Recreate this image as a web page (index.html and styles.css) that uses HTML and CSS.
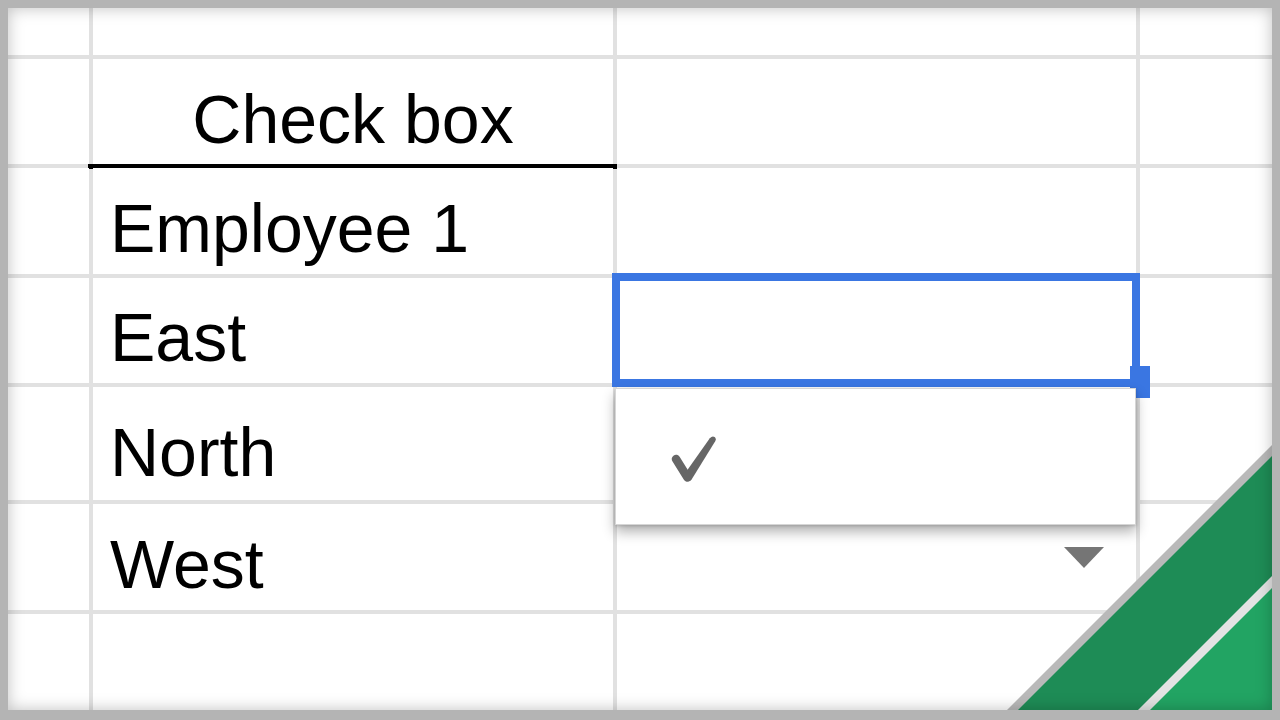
FILE: index.html
```html
<!DOCTYPE html>
<html lang="en">
<head>
<meta charset="utf-8">
<title>Check box</title>
<link rel="stylesheet" href="styles.css">
</head>
<body>
<div class="sheet">
  <div class="grid">
    <div class="cell"></div><div class="cell"></div><div class="cell"></div><div class="cell"></div>

    <div class="cell"></div><div class="cell text head">Check box</div><div class="cell"></div><div class="cell"></div>

    <div class="cell"></div><div class="cell text">Employee 1</div><div class="cell"></div><div class="cell"></div>

    <div class="cell"></div><div class="cell text">East</div>
    <div class="cell selected">
      <div class="sel-border"></div>
      <div class="handle"></div>
      <div class="dropdown">
        <svg class="check" width="46" height="48" viewBox="0 0 46 48" aria-hidden="true">
          <path d="M5 24 L16.5 42.5" stroke="#666666" stroke-width="8.5" stroke-linecap="round" fill="none"/>
          <path d="M12.5 40.5 L38.8 3.2 Q41.2 0.6 43.6 2 Q45.6 3.8 44.2 6.2 L20.6 44.6 Q16.6 49.2 12.5 40.5 Z" fill="#666666"/>
        </svg>
      </div>
    </div>
    <div class="cell"></div>

    <div class="cell"></div><div class="cell text north">North</div><div class="cell"></div><div class="cell"></div>

    <div class="cell"></div><div class="cell text">West</div>
    <div class="cell arrow-cell"><span class="arrow"></span></div>
    <div class="cell"></div>

    <div class="cell"></div><div class="cell"></div><div class="cell"></div><div class="cell"></div>
  </div>

  <svg class="corner" width="272" height="272" viewBox="0 0 272 272" aria-hidden="true">
    <polygon points="272,7 272,272 7,272" fill="#b9b9b9"/>
    <polygon points="272,18 272,272 18,272" fill="#1e8c56"/>
    <polygon points="272,138 272,272 138,272" fill="#e3e3e3"/>
    <polygon points="272,150 272,272 150,272" fill="#22a463"/>
  </svg>
</div>
</body>
</html>
```

FILE: styles.css
```css
html, body {
  margin: 0;
  padding: 0;
}

body {
  width: 1280px;
  height: 720px;
  background: #b4b4b4;
  overflow: hidden;
  font-family: "Liberation Sans", Arial, sans-serif;
}

.sheet {
  position: relative;
  margin: 8px 0 0 8px;
  width: 1264px;
  height: 702px;
  overflow: hidden;
  background: #ffffff;
}

.sheet::after {
  content: "";
  position: absolute;
  inset: 0;
  box-shadow: inset 0 0 16px rgba(0, 0, 0, 0.25);
  pointer-events: none;
  z-index: 20;
}

.grid {
  display: grid;
  grid-template-columns: 81px 520px 519px 132px;
  grid-template-rows: 47px 105px 106px 105px 113px 106px 96px;
  gap: 4px;
  background: #e1e1e1;
  height: 100%;
}

.cell {
  background: #ffffff;
  position: relative;
}

.text {
  display: flex;
  align-items: flex-end;
  padding: 0 0 12px 17px;
  font-size: 68px;
  line-height: 68px;
  color: #000000;
  white-space: nowrap;
}

.text.north {
  padding-bottom: 14px;
}

.text.head {
  justify-content: center;
  padding: 0 0 11px 0;
}

.text.head::after {
  content: "";
  position: absolute;
  left: -5px;
  right: -4px;
  bottom: -5px;
  height: 5px;
  background: #000000;
}

.selected {
  z-index: 5;
}

.sel-border {
  position: absolute;
  top: -5px;
  left: -5px;
  right: -4px;
  bottom: -4px;
  border: 8px solid #3a76e2;
}

.handle {
  position: absolute;
  left: 513px;
  top: 88px;
  width: 20px;
  height: 32px;
  background: #3a76e2;
}

.dropdown {
  position: absolute;
  left: -2px;
  top: 110px;
  width: 521px;
  height: 137px;
  background: #ffffff;
  border: 1px solid #d6d6d6;
  box-shadow: 0 7px 12px rgba(0, 0, 0, 0.3), 0 1px 3px rgba(0, 0, 0, 0.18);
  display: flex;
  align-items: flex-start;
  box-sizing: border-box;
}

.check {
  display: block;
  margin: 46px 0 0 55px;
}

.arrow-cell {
  display: flex;
  justify-content: flex-end;
  align-items: flex-start;
}

.arrow {
  display: block;
  width: 0;
  height: 0;
  margin: 43px 32px 0 0;
  border-left: 20.5px solid transparent;
  border-right: 20.5px solid transparent;
  border-top: 21px solid #757575;
}

.corner {
  position: absolute;
  right: 0;
  bottom: 0;
  display: block;
  z-index: 10;
}
```
